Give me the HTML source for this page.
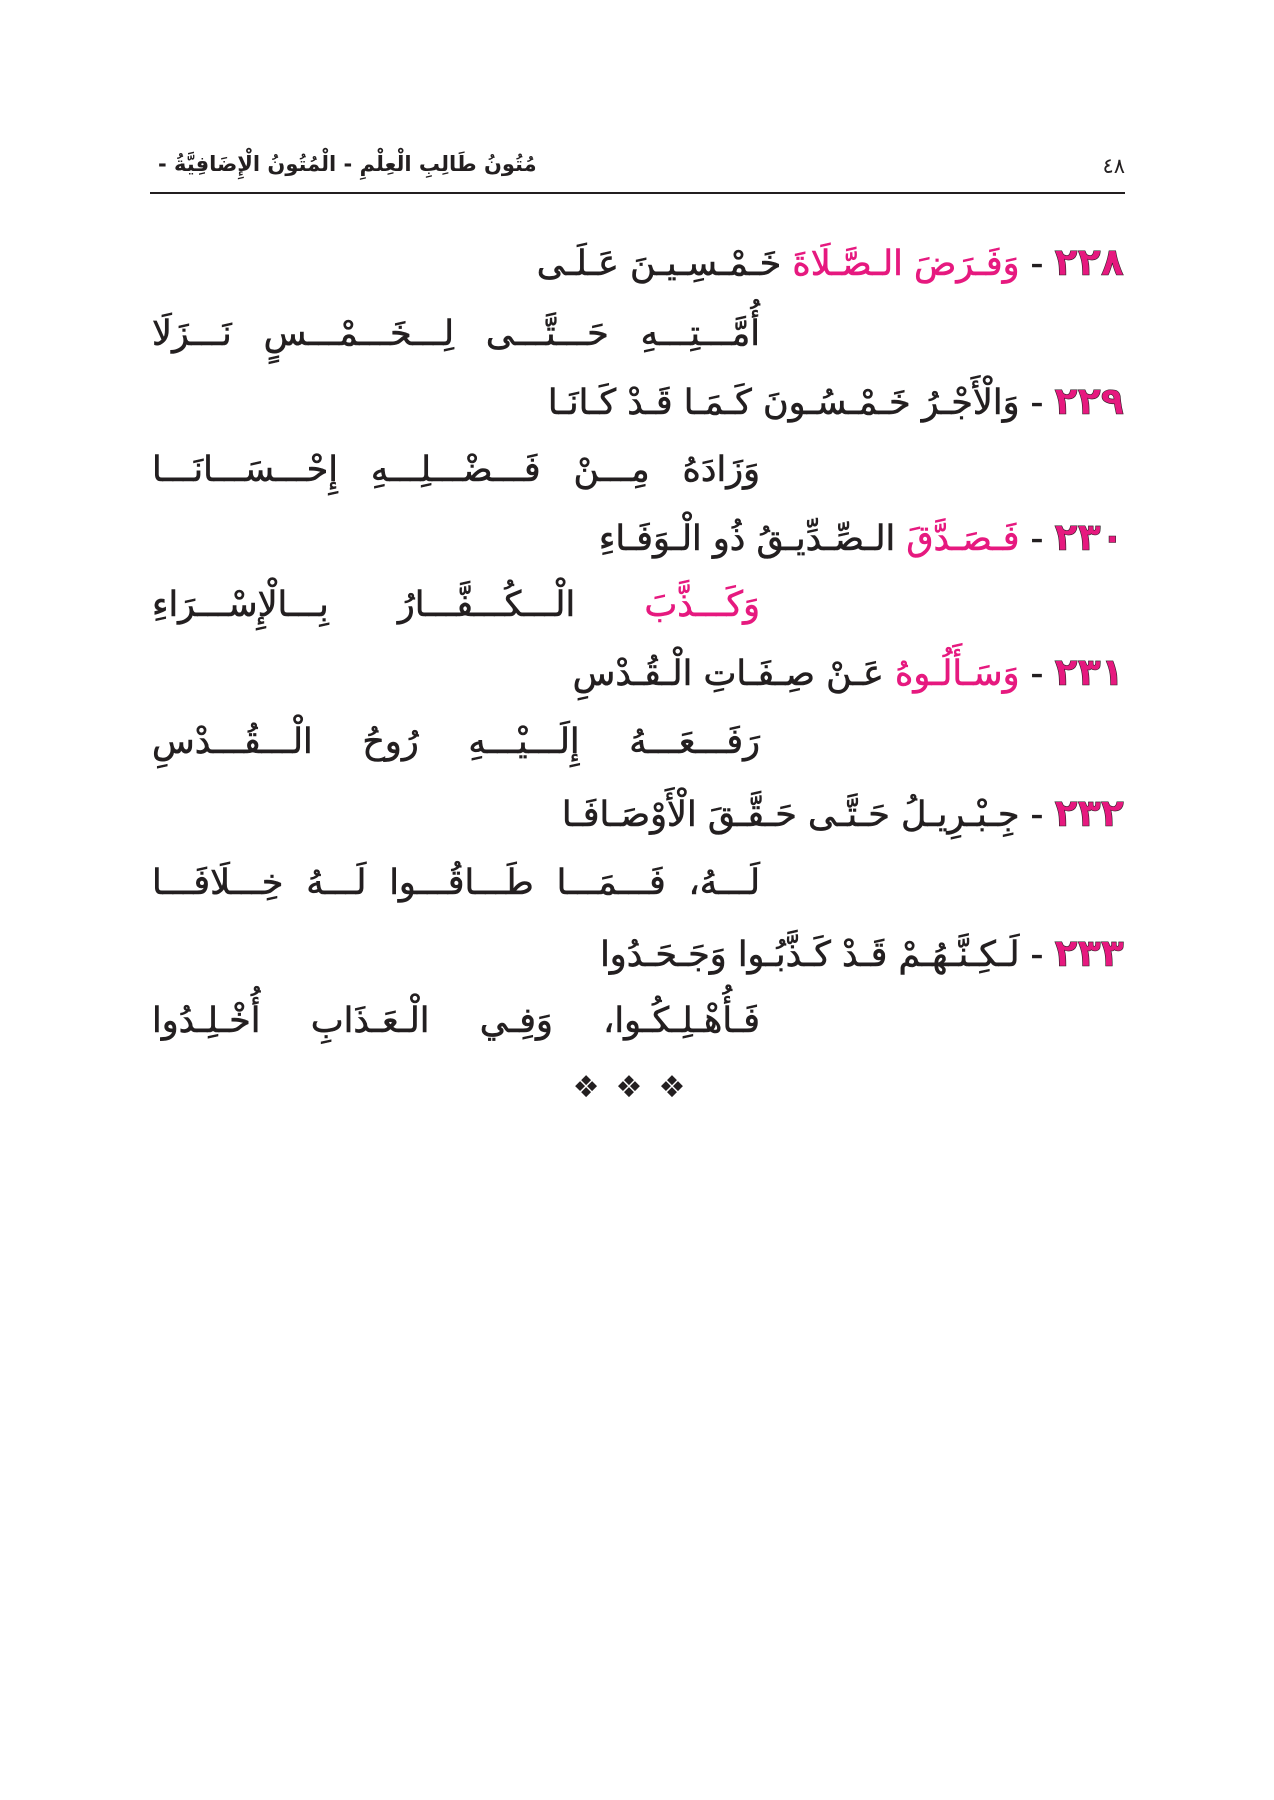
<!DOCTYPE html>
<html lang="ar" dir="rtl"><head><meta charset="utf-8">
<style>
html,body{margin:0;padding:0;background:#fff;}
body{width:1274px;height:1800px;position:relative;font-family:"DejaVu Sans",sans-serif;color:#231f20;overflow:hidden;}
.hdr{position:absolute;top:150px;left:150px;width:975px;height:42px;border-bottom:2px solid #231f20;}
.hdr .t{position:absolute;left:8px;top:2px;font-size:21px;font-weight:bold;direction:rtl;}
.hdr .n{position:absolute;right:0;top:4px;font-size:21px;}
.l{position:absolute;font-size:35px;line-height:50px;white-space:nowrap;direction:rtl;-webkit-text-stroke:0.6px #231f20;}
.a{right:150px;}
.b{left:152px;width:608px;text-align:justify;text-align-last:justify;}
.p{color:#e6197f;-webkit-text-stroke:0.6px #e6197f;}
.num{color:#e6197f;font-weight:bold;font-size:38px;}
.dia{position:absolute;top:1070px;left:0;width:1274px;text-align:center;font-size:30px;letter-spacing:16px;}
</style></head><body>
<div class="hdr"><span class="n">٤٨</span><span class="t">مُتُونُ طَالِبِ الْعِلْمِ - الْمُتُونُ الْإِضَافِيَّةُ -</span></div>

<div class="l a" style="top:237px"><span class="num">٢٢٨</span> - <span class="p">وَفَـرَضَ الـصَّـلَاةَ</span> خَـمْـسِـيـنَ عَـلَـى</div>
<div class="l b" style="top:309px">أُمَّـــتِـــهِ حَـــتَّـــى لِـــخَـــمْـــسٍ نَـــزَلَا</div>

<div class="l a" style="top:376px"><span class="num">٢٢٩</span> - وَالْأَجْـرُ خَـمْـسُـونَ كَـمَـا قَـدْ كَـانَـا</div>
<div class="l b" style="top:445px">وَزَادَهُ مِـــنْ فَـــضْـــلِـــهِ إِحْـــسَـــانَـــا</div>

<div class="l a" style="top:512px"><span class="num">٢٣٠</span> - <span class="p">فَـصَـدَّقَ</span> الـصِّـدِّيـقُ ذُو الْـوَفَـاءِ</div>
<div class="l b" style="top:580px"><span class="p">وَكَـــذَّبَ</span> الْـــكُـــفَّـــارُ بِـــالْإِسْـــرَاءِ</div>

<div class="l a" style="top:647px"><span class="num">٢٣١</span> - <span class="p">وَسَـأَلُـوهُ</span> عَـنْ صِـفَـاتِ الْـقُـدْسِ</div>
<div class="l b" style="top:717px">رَفَـــعَـــهُ إِلَـــيْـــهِ رُوحُ الْـــقُـــدْسِ</div>

<div class="l a" style="top:788px"><span class="num">٢٣٢</span> - جِـبْـرِيـلُ حَـتَّـى حَـقَّـقَ الْأَوْصَـافَـا</div>
<div class="l b" style="top:858px">لَـــهُ، فَـــمَـــا طَـــاقُـــوا لَـــهُ خِـــلَافَـــا</div>

<div class="l a" style="top:928px"><span class="num">٢٣٣</span> - لَـكِـنَّـهُـمْ قَـدْ كَـذَّبُـوا وَجَـحَـدُوا</div>
<div class="l b" style="top:996px">فَـأُهْـلِـكُـوا، وَفِـي الْـعَـذَابِ أُخْـلِـدُوا</div>

<div class="dia">❖❖❖</div>
</body></html>
